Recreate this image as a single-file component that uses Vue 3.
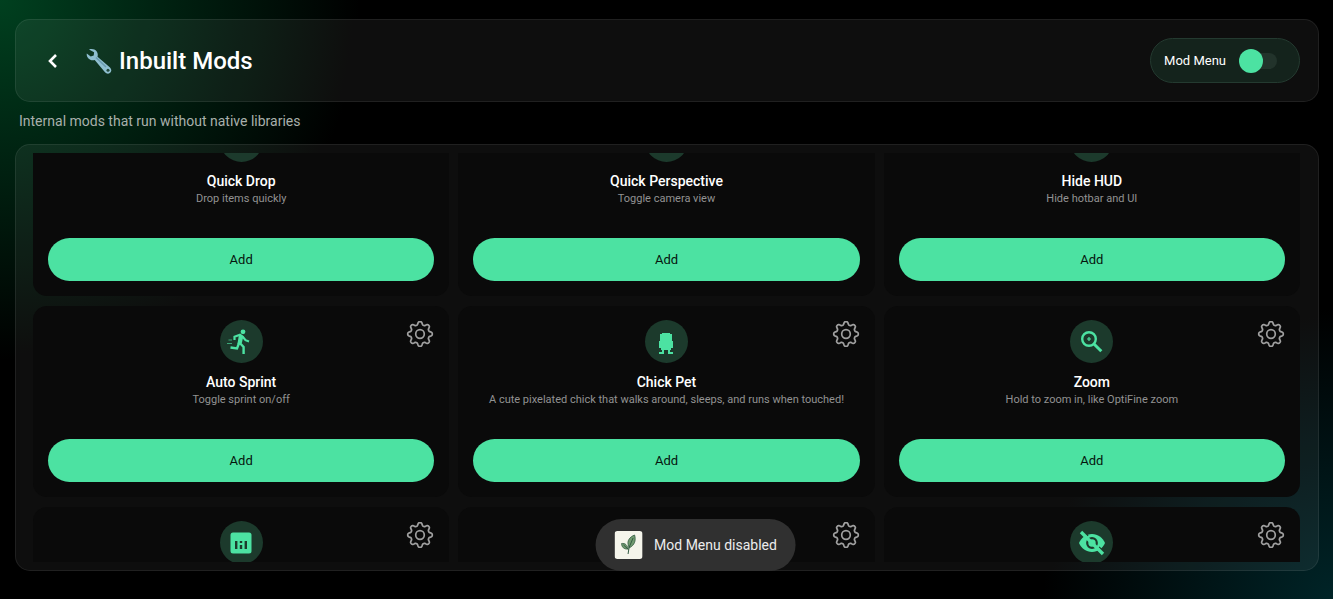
<script setup>
import { ref, onMounted } from 'vue'

const cards = [
  { title: 'Quick Drop', text: 'Drop items quickly' },
  { title: 'Quick Perspective', text: 'Toggle camera view' },
  { title: 'Hide HUD', text: 'Hide hotbar and UI' },
  { title: 'Auto Sprint', text: 'Toggle sprint on/off', icon: 'sprint', gear: true },
  { title: 'Chick Pet', text: 'A cute pixelated chick that walks around, sleeps, and runs when touched!', icon: 'chick', gear: true },
  { title: 'Zoom', text: 'Hold to zoom in, like OptiFine zoom', icon: 'zoom', gear: true },
  { icon: 'stats', gear: true },
  { gear: true },
  { icon: 'hidden', gear: true }
]

const modMenu = ref(false)
const scroller = ref(null)

// Eight-toothed outline, sampled around the circle.
const gearPath = (() => {
  const points = []
  for (let i = 0; i < 160; i++) {
    const a = (i / 160) * Math.PI * 2
    const r = 10.8 + 1.6 * Math.tanh(1.6 * Math.cos(8 * a))
    points.push(`${(14 + r * Math.cos(a)).toFixed(2)} ${(14 + r * Math.sin(a)).toFixed(2)}`)
  }
  return `M${points.join('L')}Z`
})()

onMounted(() => {
  scroller.value.scrollTop = 48
})
</script>

<template>
  <main class="page">
    <header class="panel header">
      <button class="back" type="button" aria-label="Back">
        <svg viewBox="0 0 24 24" width="24" height="24"><path d="M15 6L9 12l6 6" fill="none" stroke="#fff" stroke-width="2.6" /></svg>
      </button>
      <svg class="wrench" viewBox="0 0 26 26" width="26" height="26" aria-hidden="true">
        <path d="M3 1.5C5.800 .6 9 1.200 10.600 3.300C11.900 5 12 7 11.500 8.700L24 19.500C26 21.500 25.500 24 23.800 25.100C22.200 26.100 20.200 25.700 19 24.200L8.700 11.900C6.500 12.700 3.800 12 2.200 10.200C1 8.800 .5 7.200 .8 5.500L4.700 8.500L7.700 7.400L8.100 4.300Z" fill="#8fbfd0" />
        <path d="M10 9.500L20 19" stroke="#6a9bb0" stroke-width="1.600" />
        <circle cx="22" cy="22.200" r="1.500" fill="#21483c" />
      </svg>
      <h1>Inbuilt Mods</h1>
      <label class="menu-toggle">
        <span>Mod Menu</span>
        <input v-model="modMenu" type="checkbox" role="switch" />
      </label>
    </header>

    <p class="subtitle">Internal mods that run without native libraries</p>

    <section class="panel list">
      <div ref="scroller" class="scroller">
        <div class="grid">
          <article v-for="(card, i) in cards" :key="i" class="card">
            <div class="badge">
              <svg v-if="card.icon === 'sprint'" viewBox="0 0 28 28" width="28" height="28">
                <circle cx="16" cy="3.800" r="2.400" fill="#4ce2a2" />
                <path d="M7.500 12V8.700L13 6.700L16 9L18.500 12.200L22 13.500" fill="none" stroke="#4ce2a2" stroke-width="2.200" />
                <path d="M12 6.500L16.500 8L14.800 15L11.500 17L10.500 15.500Z" fill="#4ce2a2" />
                <path d="M12.300 14.500L10 20.500L3.500 19.500M12.800 15L16.600 19V26" fill="none" stroke="#4ce2a2" stroke-width="2.400" />
                <path d="M1.500 12H5M0 15.500H5" stroke="#4ce2a2" stroke-width="1" opacity=".65" />
              </svg>
              <svg v-else-if="card.icon === 'chick'" viewBox="0 0 28 28" width="28" height="28">
                <path d="M10 5H18V6H20V13H21V20H19V22H18V24H21V26H16V22H12V26H7V24H10V22H9V20H7V13H8V6H10Z" fill="#4ce2a2" />
              </svg>
              <svg v-else-if="card.icon === 'zoom'" viewBox="0 0 28 28" width="28" height="28">
                <circle cx="11" cy="11" r="6.800" fill="none" stroke="#4ce2a2" stroke-width="2.400" />
                <path d="M15.500 15.500L23.300 23.300" stroke="#4ce2a2" stroke-width="3" />
                <path d="M11 9V13M9 11H13" stroke="#4ce2a2" stroke-width="1.200" />
              </svg>
              <svg v-else-if="card.icon === 'stats'" viewBox="0 0 28 28" width="28" height="28">
                <rect x="3.500" y="3.500" width="21" height="21" rx="2.500" fill="#4ce2a2" />
                <path d="M9.200 12V20M14 16V20M14 12V14M18.800 12V20" stroke="#1c3a2c" stroke-width="2.400" />
              </svg>
              <svg v-else-if="card.icon === 'hidden'" viewBox="0 0 28 28" width="28" height="28">
                <path d="M1 14C3.500 8.500 8 5 14 5S24.500 8.500 27 14C24.500 19.500 20 23 14 23S3.500 19.500 1 14Z" fill="#4ce2a2" />
                <circle cx="14" cy="14" r="4.800" fill="none" stroke="#1c3a2c" stroke-width="2.200" />
                <path d="M6.500 3.500L10 7M21 18L26 23" stroke="#1c3a2c" stroke-width="1.600" />
                <path d="M3 3L25 25" stroke="#4ce2a2" stroke-width="3.400" />
              </svg>
            </div>
            <h2 v-if="card.title">{{ card.title }}</h2>
            <p v-if="card.text">{{ card.text }}</p>
            <button v-if="card.title" class="add" type="button">Add</button>
            <button v-if="card.gear" class="gear" type="button" aria-label="Settings">
              <svg viewBox="0 0 28 28" width="28" height="28" fill="none" stroke="#a0a0a0" stroke-width="1.700">
                <path :d="gearPath" stroke-linejoin="round" />
                <circle cx="14" cy="14" r="4.300" />
              </svg>
            </button>
          </article>
        </div>
      </div>
    </section>

    <div class="toast" role="status">
      <svg viewBox="0 0 28 28" width="28" height="28" aria-hidden="true">
        <rect width="28" height="28" rx="3" fill="#f5f5eb" />
        <path d="M14 15C12 10 15 6 20 4C21.500 9 20.500 14 14.500 17Z" fill="#719b70" stroke="#345c43" stroke-width=".8" />
        <path d="M13.500 18C9.500 18.500 7 16 7 12.500C10.500 12 13 14 13.500 18Z" fill="#719b70" stroke="#345c43" stroke-width=".8" />
        <path d="M18.500 7L14.500 16.500L13.500 23M9 14L14 18.500" fill="none" stroke="#345c43" stroke-width="1" />
      </svg>
      <span>Mod Menu disabled</span>
    </div>
  </main>
</template>

<style>
body {
  margin: 0;
  background: #000;
}
</style>

<style scoped>
* {
  box-sizing: border-box;
}
.page {
  position: relative;
  display: flex;
  flex-direction: column;
  height: 100vh;
  padding: 19px 14px 28px 15px;
  color: #fff;
  font-family: Roboto, sans-serif;
  background:
    radial-gradient(circle at 0 0, #00401f 0, #002412 150px, transparent 360px),
    radial-gradient(circle at 100% 100%, #002427 0, #001416 130px, transparent 290px),
    #000;
}
h1, h2, p {
  margin: 0;
}
button {
  padding: 0;
  border: 0;
  background: none;
  font: inherit;
  cursor: pointer;
}
svg {
  display: block;
}
.panel {
  border: 1px solid rgba(255, 255, 255, 0.08);
  border-radius: 15px;
  background: rgba(255, 255, 255, 0.055);
}
.header {
  display: flex;
  align-items: center;
  padding: 18px;
}
.back {
  display: grid;
  place-items: center;
  width: 38px;
  height: 38px;
}
.wrench {
  margin: 0 7px 0 14px;
}
h1 {
  font-size: 24px;
  line-height: 32px;
  font-weight: 500;
}
.menu-toggle {
  display: flex;
  align-items: center;
  gap: 13px;
  height: 45px;
  margin-left: auto;
  padding: 0 22px 0 13px;
  border: 1px solid #243a30;
  border-radius: 23px;
  background: #14231c;
  font-size: 13px;
}
.menu-toggle input {
  position: relative;
  width: 38px;
  height: 24px;
  margin: 0;
  appearance: none;
}
.menu-toggle input::before {
  content: "";
  position: absolute;
  inset: 4px 0 4px 4px;
  border-radius: 8px;
  background: #22332b;
}
.menu-toggle input::after {
  content: "";
  position: absolute;
  top: 0;
  left: 0;
  width: 24px;
  height: 24px;
  border-radius: 50%;
  background: #4ce2a2;
}
.menu-toggle input:checked::after {
  left: 14px;
}
.subtitle {
  padding: 9px 4px 13px;
  color: #a9b0ac;
  font-size: 14px;
  line-height: 20px;
}
.list {
  flex: 1;
  min-height: 0;
  padding: 8px 18px 8px 17px;
}
.scroller {
  height: 100%;
  overflow-y: auto;
  scrollbar-width: none;
}
.grid {
  display: grid;
  grid-template-columns: repeat(3, minmax(0, 1fr));
  grid-auto-rows: minmax(191px, auto);
  gap: 10px 9px;
}
.card {
  position: relative;
  display: flex;
  flex-direction: column;
  align-items: center;
  padding: 14px 15px 15px;
  border-radius: 14px;
  background: #0a0a0a;
  text-align: center;
}
.badge {
  display: grid;
  place-items: center;
  width: 43px;
  height: 43px;
  border-radius: 50%;
  background: #1c3a2c;
}
h2 {
  margin-top: 9px;
  font-size: 14px;
  line-height: 20px;
  font-weight: 500;
}
.card p {
  color: #929292;
  font-size: 11px;
  line-height: 16px;
}
.add {
  width: 100%;
  height: 43px;
  margin-top: auto;
  border-radius: 22px;
  background: #4ce2a2;
  color: #06150e;
  font-size: 13px;
}
.gear {
  position: absolute;
  top: 14px;
  right: 15px;
}
.toast {
  position: absolute;
  bottom: 28px;
  left: 50%;
  display: flex;
  align-items: center;
  gap: 12px;
  width: max-content;
  height: 52px;
  padding: 0 19px;
  border-radius: 26px;
  background: #303030;
  color: #ececec;
  font-size: 14px;
  transform: translateX(-50%);
  margin-left: 29px;
}
</style>
